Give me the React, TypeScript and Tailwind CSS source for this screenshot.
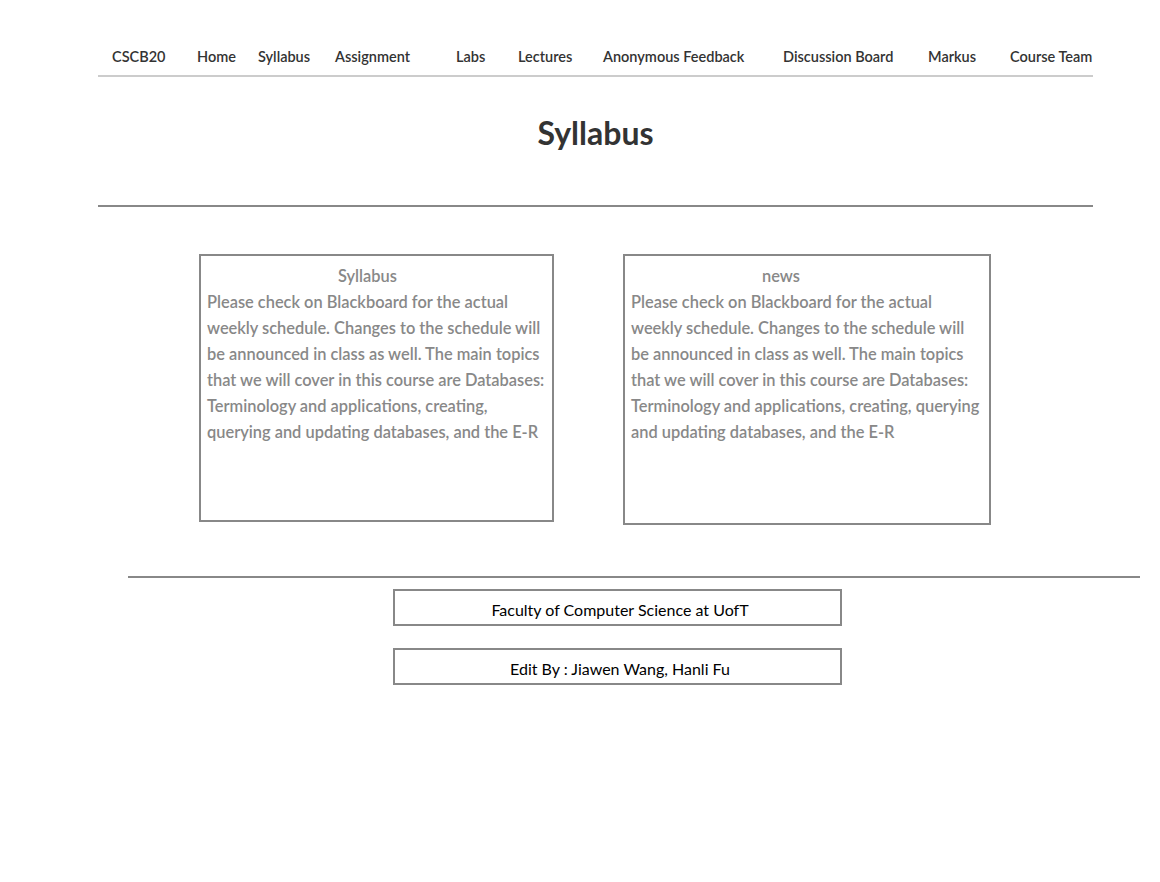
import React from "react";

const navItems = [
  { label: "CSCB20", w: "w-[85px]" },
  { label: "Home", w: "w-[61px]" },
  { label: "Syllabus", w: "w-[77px]" },
  { label: "Assignment", w: "w-[121px]" },
  { label: "Labs", w: "w-[62px]" },
  { label: "Lectures", w: "w-[85px]" },
  { label: "Anonymous Feedback", w: "w-[180px]" },
  { label: "Discussion Board", w: "w-[145px]" },
  { label: "Markus", w: "w-[82px]" },
  { label: "Course Team", w: "w-auto" },
];

const body =
  "Please check on Blackboard for the actual weekly schedule. Changes to the schedule will be announced in class as well. The main topics that we will cover in this course are Databases: Terminology and applications, creating, querying and updating databases, and the E-R";

function Card({ title, className }: { title: string; className: string }) {
  return (
    <div className={`border-2 border-[#888] pt-[7px] px-[6px] text-[16.4px] leading-[26px] text-[#888] ${className}`}>
      <div className="pl-[131px] font-semibold">{title}</div>
      <p className="font-semibold">{body}</p>
    </div>
  );
}

export default function App() {
  return (
    <div className="min-h-screen bg-white font-['Lato','Liberation_Sans',sans-serif]">
      <div className="ml-[98px] w-[995px] pt-[45px]">
        <nav className="flex items-center pl-[14px] pb-[6px] border-b-2 border-[#ccc]">
          {navItems.map((item) => (
            <a
              key={item.label}
              className={`${item.w} shrink-0 whitespace-nowrap text-[14.5px] leading-[24px] font-semibold text-[#333]`}
            >
              {item.label}
            </a>
          ))}
        </nav>

        <h1 className="mt-[38px] text-center text-[32px] leading-[36px] font-bold text-[#333]">
          Syllabus
        </h1>

        <hr className="mt-[54px] border-0 h-[2px] bg-[#888]" />

        <div className="mt-[47px] flex items-start pl-[101px] gap-[69px]">
          <Card title="Syllabus" className="w-[355px] h-[268px]" />
          <Card title="news" className="w-[368px] h-[271px]" />
        </div>
      </div>

      <div className="ml-[128px] w-[1012px] mt-[51px] h-[2px] bg-[#888]" />

      <footer className="ml-[393px] w-[449px] mt-[11px] flex flex-col gap-[22px]">
        <div className="h-[37px] border-2 border-[#888] flex items-center justify-center pl-[5px] pt-[5px] text-[16px] text-black">
          Faculty of Computer Science at UofT
        </div>
        <div className="h-[37px] border-2 border-[#888] flex items-center justify-center pl-[5px] pt-[5px] text-[16px] text-black">
          Edit By : Jiawen Wang, Hanli Fu
        </div>
      </footer>
    </div>
  );
}
